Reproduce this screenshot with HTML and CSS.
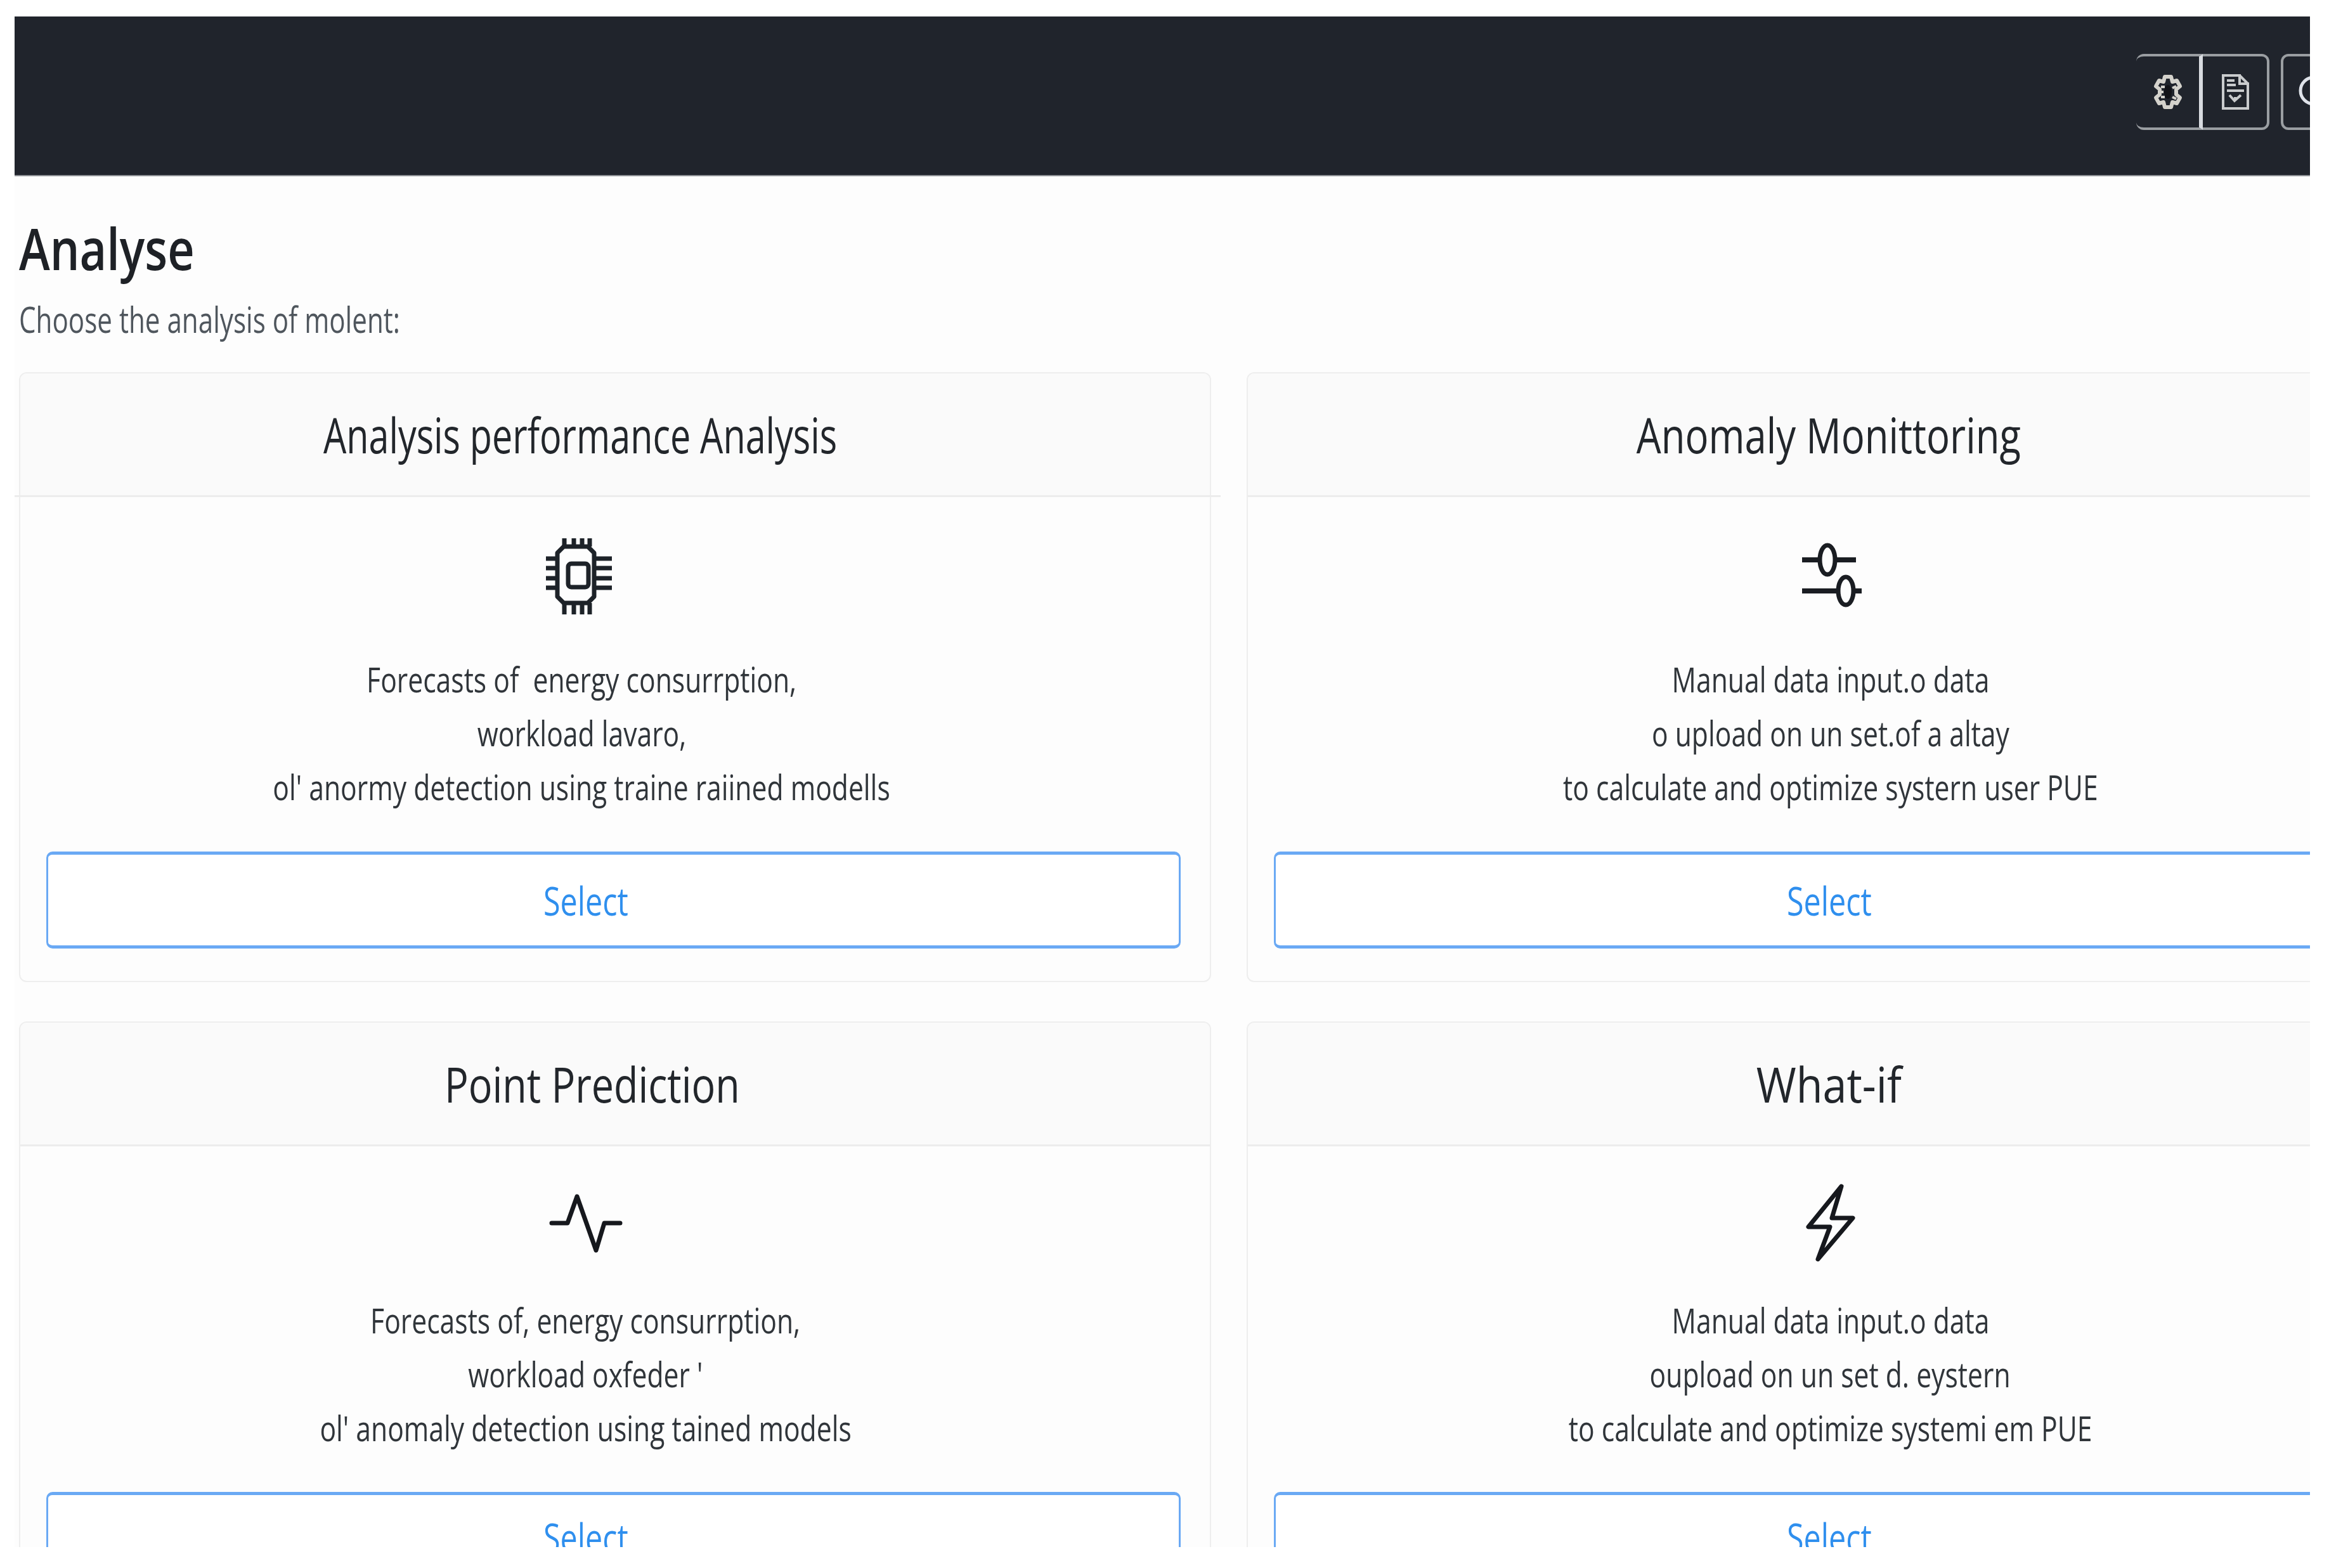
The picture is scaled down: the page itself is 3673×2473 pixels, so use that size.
FILE: index.html
```html
<!DOCTYPE html>
<html lang="en">
<head>
<meta charset="utf-8">
<title>Analyse</title>
<link rel="stylesheet" href="styles.css">
</head>
<body>
<div class="frame">
  <header class="navbar">
    <div class="nav-actions">
      <div class="btn-group">
        <button class="nav-btn nav-btn-first" aria-label="Settings">
          <svg class="gear" width="50" height="56" viewBox="0 0 50 56"><path d="M20 4h10l2 8 7-2 5 9-6 5v8l6 5-5 9-7-2-2 8H20l-2-8-7 2-5-9 6-5v-8l-6-5 5-9 7 2z" fill="none" stroke="#d4d2cc" stroke-width="6" stroke-linejoin="round"/><path d="M14 20h6M12 28h6M14 36h6M32 22l6-3M32 36l6 3" stroke="#d4d2cc" stroke-width="4"/><ellipse cx="25" cy="28" rx="6" ry="11" fill="#121318"/></svg>
        </button>
        <button class="nav-btn" aria-label="Save">
          <svg width="46" height="58" viewBox="0 0 46 58"><path d="M4 3h26v13h13v39H4zM30 3l13 13M10 11h12M10 18h14M10 27h27M14 34l8 9 10-9M23 43v-6" fill="none" stroke="#c9cbcd" stroke-width="4"/></svg>
        </button>
      </div>
      <button class="nav-btn nav-btn-single" aria-label="Search">
        <svg width="60" height="56" viewBox="0 0 60 56"><circle cx="26" cy="26" r="21" fill="none" stroke="#dfe3ea" stroke-width="5"/><path d="M42 42l14 12" stroke="#dfe3ea" stroke-width="5"/></svg>
      </button>
    </div>
  </header>
  <main class="content">
    <h1 class="page-title"><span class="squeeze">Analyse</span></h1>
    <p class="page-lead"><span class="squeeze">Choose the analysis of molent:</span></p>
    <section class="card-grid">
      <article class="card card-first">
        <h2 class="card-header shift-a"><span class="squeeze squeeze-long">Analysis performance Analysis</span></h2>
        <div class="card-body">
          <div class="icon-box shift-a">
            <svg width="110" height="126" viewBox="0 0 110 126"><g fill="none" stroke="#1d2228" stroke-width="7"><path d="M31 16h38l10 10v69l-10 10H31l-10-10V26z" stroke-linejoin="round"/><rect x="38" y="43" width="32" height="37" rx="5"/><path d="M32 3v13M47 3v13M60 3v13M72 3v13M32 105v18M47 105v18M60 105v18M72 105v18M3 35h18M3 50h18M3 66h18M3 81h18M79 35h28M79 50h28M79 66h28M79 81h28"/></g></svg>
          </div>
          <div class="card-text shift-t">
            <p><span class="squeeze">Forecasts of&nbsp; energy consurrption,</span></p>
            <p><span class="squeeze">workload lavaro,</span></p>
            <p><span class="squeeze">ol' anormy detection using traine raiined modells</span></p>
          </div>
          <button class="select-btn"><span class="select-label shift-b"><span class="squeeze">Select</span></span></button>
        </div>
      </article>
      <article class="card card-right">
        <h2 class="card-header shift-c"><span class="squeeze squeeze-anomaly">Anomaly Monittoring</span></h2>
        <div class="card-body">
          <div class="icon-box shift-s">
            <svg width="100" height="116" viewBox="0 0 100 116"><g fill="none" stroke="#1a1d22"><path d="M3 37h27M56 37h32M3 86h56M84 86h13" stroke-width="8"/><ellipse cx="43" cy="37" rx="12" ry="23" stroke-width="7"/><ellipse cx="72" cy="86" rx="12" ry="22" stroke-width="7"/></g></svg>
          </div>
          <div class="card-text shift-e">
            <p><span class="squeeze">Manual data input.o data</span></p>
            <p><span class="squeeze">o upload on un set.of a altay</span></p>
            <p><span class="squeeze">to calculate and optimize systern user PUE</span></p>
          </div>
          <button class="select-btn"><span class="select-label shift-d"><span class="squeeze">Select</span></span></button>
        </div>
      </article>
      <article class="card card-lower">
        <h2 class="card-header shift-p"><span class="squeeze squeeze-mid">Point Prediction</span></h2>
        <div class="card-body">
          <div class="icon-box shift-l">
            <svg width="128" height="124" viewBox="0 0 128 124"><path d="M10 66h25l15-42 30 85 13-43h25" fill="none" stroke="#16181d" stroke-width="7" stroke-linecap="round" stroke-linejoin="round"/></svg>
          </div>
          <div class="card-text shift-l">
            <p><span class="squeeze">Forecasts of, energy consurrption,</span></p>
            <p><span class="squeeze">workload oxfeder '</span></p>
            <p><span class="squeeze">ol' anomaly detection using tained models</span></p>
          </div>
          <button class="select-btn"><span class="select-label shift-b"><span class="squeeze">Select</span></span></button>
        </div>
      </article>
      <article class="card card-lower card-right">
        <h2 class="card-header shift-c"><span class="squeeze squeeze-short">What-if</span></h2>
        <div class="card-body">
          <div class="icon-box shift-e">
            <svg width="86" height="130" viewBox="0 0 86 130"><path d="M60 8L8 72h34L23 123l55-65H45z" fill="none" stroke="#16181d" stroke-width="7" stroke-linecap="round" stroke-linejoin="round"/></svg>
          </div>
          <div class="card-text shift-e">
            <p><span class="squeeze">Manual data input.o data</span></p>
            <p><span class="squeeze">oupload on un set d. eystern</span></p>
            <p><span class="squeeze">to calculate and optimize systemi em PUE</span></p>
          </div>
          <button class="select-btn"><span class="select-label shift-d"><span class="squeeze">Select</span></span></button>
        </div>
      </article>
    </section>
  </main>
</div>
</body>
</html>
```
FILE: styles.css
```css
* { box-sizing: border-box; }
html, body { margin: 0; padding: 0; background: #fff; }
body { font-family: "Open Sans", "Noto Sans", sans-serif; color: #212529; }
.frame {
  margin: 26px 30px 0 23px;
  height: 2414px;
  overflow: hidden;
  background: #fdfdfd;
  filter: blur(0.6px);
}
.navbar {
  height: 252px;
  padding-bottom: 12px;
  background: #20242c;
  border-bottom: 2px solid #8f9296;
  display: flex;
  justify-content: flex-end;
  align-items: center;
}
.nav-actions { display: flex; gap: 18px; margin-right: -54px; }
.btn-group { display: flex; }
.nav-btn {
  width: 100px;
  height: 120px;
  padding: 0;
  background: transparent;
  border: 4px solid #9a9ea2;
  border-radius: 12px;
  display: flex;
  align-items: center;
  justify-content: center;
}
.btn-group .nav-btn { width: 105px; border-radius: 0 12px 12px 0; border-left: 0; }
.btn-group .nav-btn-first { border-radius: 12px 0 0 12px; border-right: 6px solid #d8dbe0; }
.nav-btn-single { justify-content: flex-start; padding-left: 22px; border-radius: 12px 0 0 12px; }
.content { padding: 0 0 0 7px; }
.squeeze { display: inline-block; white-space: nowrap; transform: scaleX(0.79); }
.squeeze-long { transform: scaleX(0.746); }
.squeeze-mid { transform: scaleX(0.815); }
.squeeze-anomaly { transform: scaleX(0.8); }
.squeeze-short { transform: scaleX(0.886); }
.page-title {
  margin: 0;
  padding-top: 58px;
  font-size: 91px;
  line-height: 110px;
  font-weight: 600;
  color: #1e2126;
}
.page-title .squeeze { transform: scaleX(0.81); transform-origin: left center; }
.page-lead {
  margin: 0;
  padding-top: 19px;
  font-size: 56px;
  line-height: 76px;
  color: #4f565d;
}
.page-lead .squeeze { transform: scaleX(0.753); transform-origin: left center; }
.card-grid {
  margin-top: 46px;
  display: grid;
  grid-template-columns: 1880px 1880px;
  column-gap: 56px;
  row-gap: 62px;
}
.card {
  border: 2px solid #eeeeee;
  border-radius: 12px;
  background: #fdfdfd;
  height: 962px;
}
.card-header {
  position: relative;
  margin: 0;
  height: 195px;
  background: #fafafa;
  border-bottom: 3px solid #ececec;
  border-radius: 10px 10px 0 0;
  display: flex;
  align-items: center;
  justify-content: center;
  font-size: 77px;
  font-weight: 400;
  color: #22262b;
}
.card-first .card-header::after {
  content: "";
  position: absolute;
  left: -9px;
  right: -17px;
  bottom: -3px;
  height: 3px;
  background: #ececec;
}
.card-body { padding: 62px 46px 0 41px; }
.icon-box { height: 183px; display: flex; justify-content: center; align-items: flex-start; }
.card-text { font-size: 54px; line-height: 85px; color: #30353a; text-align: center; }
.card-text p { margin: 0; }
.select-btn {
  display: block;
  width: 100%;
  height: 153px;
  margin-top: 59px;
  padding: 0;
  background: #fff;
  border: 3px solid #6aa9f4;
  border-top-width: 5px;
  border-bottom-width: 5px;
  border-radius: 10px;
  font: inherit;
  font-size: 63px;
  color: #2f8fee;
}
.select-btn .squeeze { transform: scaleX(0.77); }
.select-label { display: block; text-align: center; }
.card-lower .card-body { padding-top: 55px; }
.card-lower .icon-box { height: 177px; }
.card-lower .select-btn { margin-top: 58px; }
.card-lower .select-label { padding-bottom: 12px; }
.card-right .card-body { padding-right: 0; }
.shift-a { padding-right: 110px; }
.shift-b { padding-right: 88px; }
.shift-c { padding-right: 44px; }
.shift-d { padding-right: 84px; }
.shift-e { padding-right: 80px; }
.shift-s { padding-right: 76px; }
.shift-t { padding-right: 100px; }
.shift-p { padding-right: 73px; }
.shift-l { padding-right: 88px; }
```
